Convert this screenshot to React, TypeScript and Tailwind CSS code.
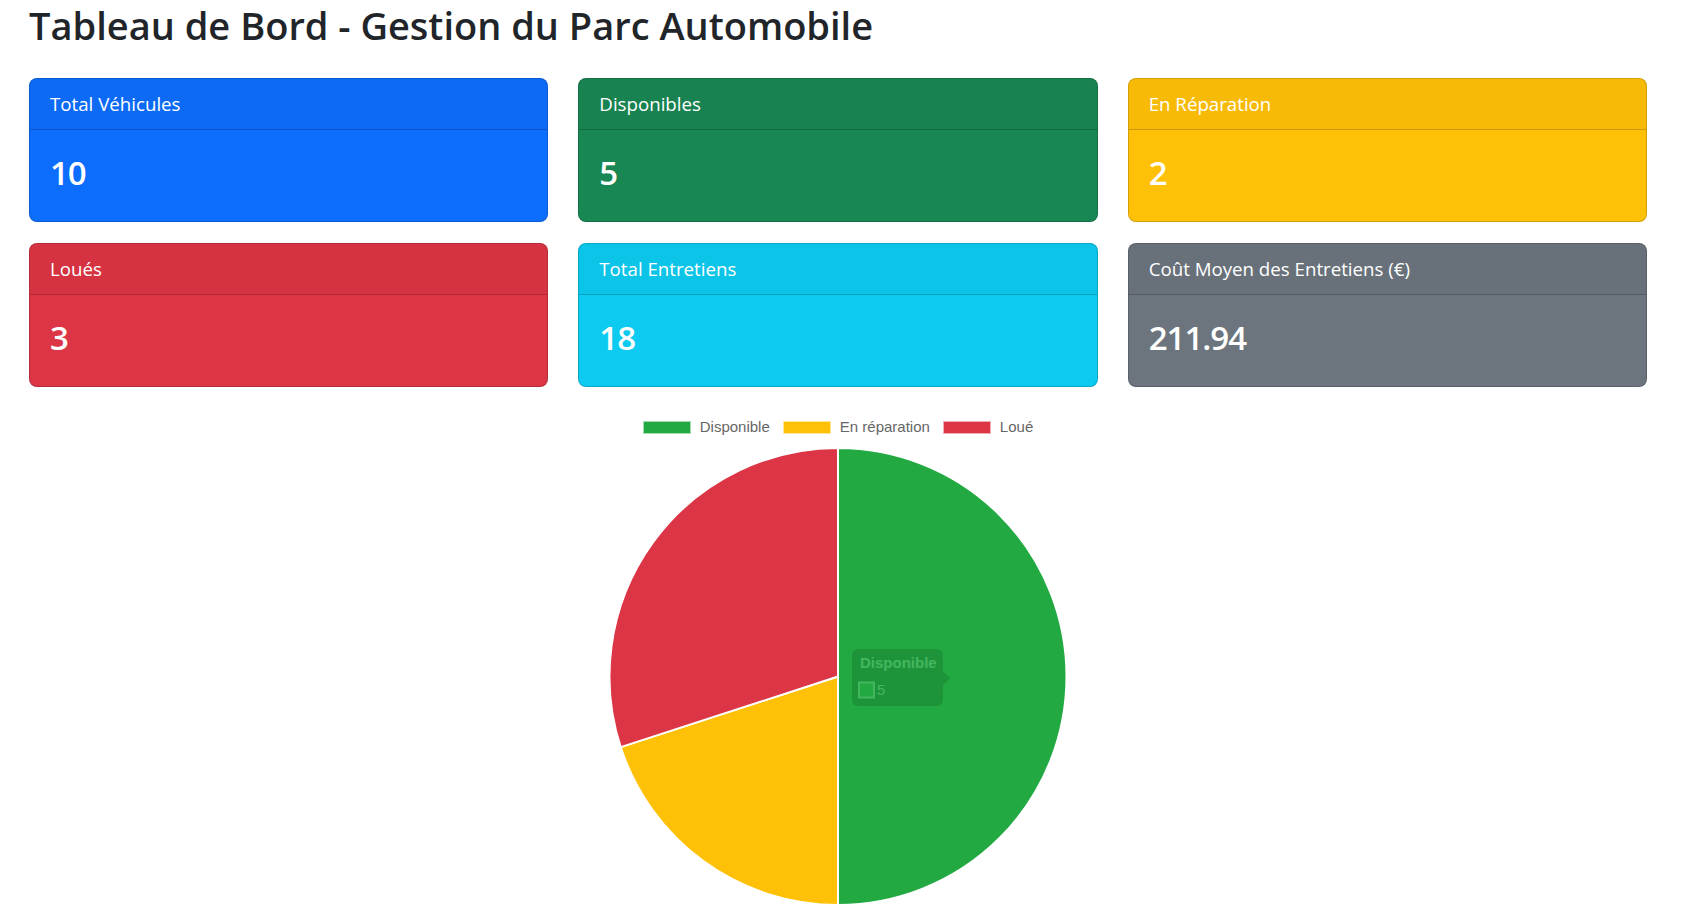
import React from 'react';

type Stat = { label: string; value: string; bg: string };

const stats: Stat[] = [
  { label: 'Total Véhicules', value: '10', bg: 'bg-[#0d6efd]' },
  { label: 'Disponibles', value: '5', bg: 'bg-[#198754]' },
  { label: 'En Réparation', value: '2', bg: 'bg-[#ffc107]' },
  { label: 'Loués', value: '3', bg: 'bg-[#dc3545]' },
  { label: 'Total Entretiens', value: '18', bg: 'bg-[#0dcaf0]' },
  { label: 'Coût Moyen des Entretiens (€)', value: '211.94', bg: 'bg-[#6c757d]' },
];

const slices = [
  { label: 'Disponible', value: 5, color: '#22a942', box: 'bg-[#22a942]' },
  { label: 'En réparation', value: 2, color: '#ffc107', box: 'bg-[#ffc107]' },
  { label: 'Loué', value: 3, color: '#dc3545', box: 'bg-[#dc3545]' },
];

const CX = 230;
const CY = 229.5;
const R = 228.5;

const point = (deg: number) => {
  const a = (deg * Math.PI) / 180;
  return [CX + R * Math.sin(a), CY - R * Math.cos(a)];
};

const StatCard = ({ stat }: { stat: Stat }) => (
  <div className={`${stat.bg} h-[144px] rounded-[8px] border border-black/[0.175] text-white flex flex-col overflow-hidden`}>
    <div className="h-[51px] px-[20px] flex items-center border-b border-black/[0.175] bg-black/[0.03] text-[18.7px] leading-[30px]">
      {stat.label}
    </div>
    <div className="flex-1 px-[20px] pt-[19px]">
      <h2 className="text-[33px] leading-[48px] font-semibold tracking-[-1px]">{stat.value}</h2>
    </div>
  </div>
);

const PieChart = () => {
  const total = slices.reduce((s, x) => s + x.value, 0);
  let start = 0;
  return (
    <svg width="460" height="460" viewBox="0 0 460 460">
      {slices.map((s) => {
        const end = start + (s.value / total) * 360;
        const [x1, y1] = point(start);
        const [x2, y2] = point(end);
        const large = end - start > 180 ? 1 : 0;
        const d = `M ${CX} ${CY} L ${x1} ${y1} A ${R} ${R} 0 ${large} 1 ${x2} ${y2} Z`;
        start = end;
        return <path key={s.label} d={d} fill={s.color} stroke="#fff" strokeWidth="2" strokeLinejoin="round" />;
      })}
      {/* tooltip fading out */}
      <g opacity="0.15" fontFamily="'Liberation Sans', Arial, sans-serif">
        <rect x="244" y="202" width="91" height="57" rx="6" fill="rgba(0,0,0,0.8)" />
        <path d="M 335 224.5 L 342.5 231.3 L 335 238 Z" fill="rgba(0,0,0,0.8)" />
        <text x="252" y="221.3" fill="#fff" fontSize="15" fontWeight="bold">Disponible</text>
        <rect x="251" y="235.5" width="15" height="15" fill="#22a942" stroke="#fff" strokeWidth="2" />
        <text x="269" y="248" fill="#fff" fontSize="15">5</text>
      </g>
    </svg>
  );
};

export default function App() {
  return (
    <div className="min-h-screen bg-white pl-[29px] pr-[42px] font-['Open_Sans',sans-serif] text-[#212529]">
      <h1 className="pt-[1px] text-[38px] leading-[48px] font-semibold">
        Tableau de Bord - Gestion du Parc Automobile
      </h1>

      <div className="mt-[29px] grid grid-cols-3 gap-x-[30px] gap-y-[21px]">
        {stats.map((s) => (
          <StatCard key={s.label} stat={s} />
        ))}
      </div>

      <div className="flex flex-col items-center">
        <div className="mt-[27px] h-[26px] flex items-center gap-[13px] font-['Liberation_Sans',Arial,sans-serif] text-[15px] text-[#666]">
          {slices.map((s) => (
            <div key={s.label} className="flex items-center gap-[9px]">
              <span className={`${s.box} w-[48px] h-[13px] border border-white/60`} />
              <span>{s.label}</span>
            </div>
          ))}
        </div>
        <div className="mt-[7px]">
          <PieChart />
        </div>
      </div>
    </div>
  );
}
